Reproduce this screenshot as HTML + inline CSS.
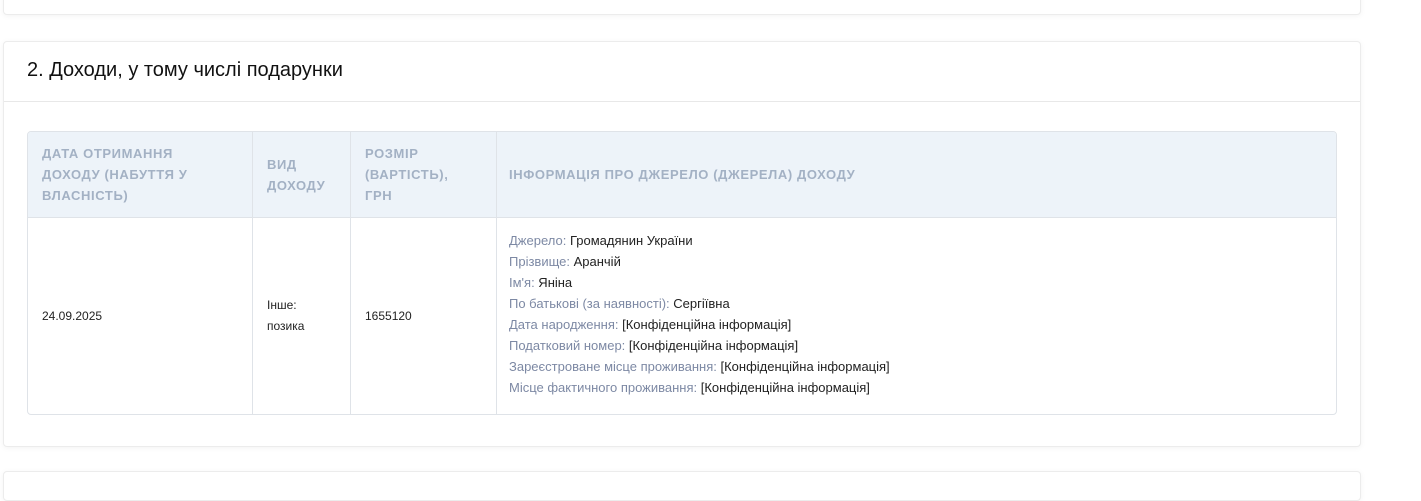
<!DOCTYPE html>
<html><head><meta charset="utf-8"><style>
*{box-sizing:border-box;margin:0;padding:0}
body{width:1421px;height:478px;background:#fff;font-family:"Liberation Sans",Arial,sans-serif;overflow:hidden;position:relative}
.card{position:absolute;left:3px;width:1358px;background:#fff;border:1px solid #ececec;border-radius:4px;box-shadow:0 1px 6px rgba(0,0,0,0.05)}
.h{height:60px;border-bottom:1px solid #e8e8e8;padding:17px 0 0 23px;font-size:20px;color:#111}
table{position:absolute;left:23px;top:89px;width:1310px;border-collapse:separate;border-spacing:0;border:1px solid #dfe3e8;border-radius:4px;overflow:hidden}
th{background:#edf3f9;color:#a3b1c4;font-size:13px;font-weight:bold;text-transform:uppercase;letter-spacing:.6px;text-align:left;line-height:21px;padding:0 14px;height:86px;border-bottom:1px solid #dfe3e8;border-left:1px solid #dfe3e8;vertical-align:middle}
th:first-child,td:first-child{border-left:none}
td{font-size:12px;color:#222;padding:0 12px 0 14px;height:196px;border-left:1px solid #dfe3e8;vertical-align:middle;line-height:21px}
td.i{font-size:13px;padding-left:12px;padding-bottom:4px}
.l{color:#7d89a4}
</style></head><body>
<div class="card" style="top:-10px;height:25px"></div>
<div class="card" style="top:41px;height:406px">
<div class="h">2. Доходи, у тому числі подарунки</div>
<table>
<tr><th style="width:224px">Дата отримання<br>доходу (набуття у<br>власність)</th><th style="width:98px">Вид<br>доходу</th><th style="width:146px">Розмір<br>(вартість),<br>грн</th><th style="padding-left:12px">Інформація про джерело (джерела) доходу</th></tr>
<tr><td>24.09.2025</td><td>Інше:<br>позика</td><td>1655120</td><td class="i">
<span class="l">Джерело:</span> Громадянин України<br>
<span class="l">Прізвище:</span> Аранчій<br>
<span class="l">Ім'я:</span> Яніна<br>
<span class="l">По батькові (за наявності):</span> Сергіївна<br>
<span class="l">Дата народження:</span> [Конфіденційна інформація]<br>
<span class="l">Податковий номер:</span> [Конфіденційна інформація]<br>
<span class="l">Зареєстроване місце проживання:</span> [Конфіденційна інформація]<br>
<span class="l">Місце фактичного проживання:</span> [Конфіденційна інформація]
</td></tr>
</table>
</div>
<div class="card" style="top:471px;height:30px"></div>
</body></html>
